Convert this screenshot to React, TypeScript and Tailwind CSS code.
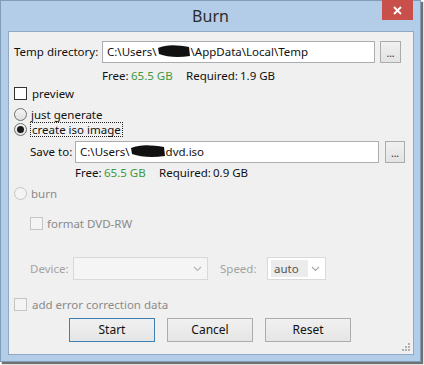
import React from 'react';

const font = { fontFamily: '"Noto Sans", "Open Sans", sans-serif' };

function Blob({ w }: { w: number }) {
  return (
    <svg width={w} height="14" viewBox={`0 0 ${w} 14`} className="inline-block align-middle -mt-[2px]">
      <path
        d={`M1 4 C ${w * 0.3} 0, ${w * 0.6} 1, ${w - 2} 3 L ${w - 1} 12 C ${w * 0.6} 14, ${w * 0.3} 13, 2 10 Z`}
        fill="#111"
      />
    </svg>
  );
}

function Checkbox({ disabled }: { disabled?: boolean }) {
  return (
    <span
      className={
        'inline-block w-[13px] h-[13px] border shrink-0 ' +
        (disabled ? 'border-[#c4c4c4] bg-[#f4f4f4]' : 'border-[#333333] bg-white')
      }
    />
  );
}

function Radio({ checked, disabled }: { checked?: boolean; disabled?: boolean }) {
  return (
    <span
      className={
        'flex items-center justify-center w-[13px] h-[13px] rounded-full border shrink-0 ' +
        (disabled
          ? 'border-[#c4c4c4] bg-[#f4f4f4]'
          : 'border-[#707070] bg-gradient-to-b from-[#f4f4f4] to-[#e0e0e0]')
      }
    >
      {checked && <span className="w-[7px] h-[7px] rounded-full bg-[#1a1a1a]" />}
    </span>
  );
}

function Browse({ w }: { w: string }) {
  return (
    <div
      className={
        w +
        ' h-full border border-[#acacac] bg-gradient-to-b from-[#f0f0f0] to-[#e3e3e3] flex items-end justify-center pb-[4px] text-[10px] leading-none text-[#222]'
      }
    >
      ...
    </div>
  );
}

function Chevron({ color }: { color: string }) {
  return (
    <svg width="9" height="6" viewBox="0 0 9 6">
      <path d="M1 1 L4.5 4.5 L8 1" stroke={color} strokeWidth="1.2" fill="none" />
    </svg>
  );
}

function Btn({ label, def }: { label: string; def?: boolean }) {
  return (
    <div
      className={
        'w-[86px] h-[24px] border flex items-center justify-center text-[12px] text-[#111] bg-gradient-to-b from-[#f0f0f0] to-[#e5e5e5] ' +
        (def ? 'border-[#3c7fb1]' : 'border-[#acacac]')
      }
    >
      {label}
    </div>
  );
}

function SpaceRow({ req, pad }: { req: string; pad: string }) {
  return (
    <div className={'h-[14px] flex items-center leading-none whitespace-nowrap ' + pad}>
      <span className="w-[29px]">Free:</span>
      <span className="w-[55px] text-[#3e9a3e]">65.5 GB</span>
      <span className="w-[54px]">Required:</span>
      <span>{req}</span>
    </div>
  );
}

export default function App() {
  return (
    <div className="w-[424px] h-[365px] bg-[#fafafa] overflow-hidden" style={font}>
      <div className="relative w-[421px] h-[362px] bg-[#b3cde8] border border-[#7f9db9] shadow-[2px_2px_1px_rgba(0,0,0,0.55)] pl-[7px] pt-[30px]">
        <div className="absolute left-0 right-0 top-0 h-[30px] flex items-center justify-center text-[16px] text-[#2b2b2b]">
          Burn
        </div>
        <div className="absolute top-[-1px] right-[7px] w-[31px] h-[20px] bg-[#c9504a] flex items-center justify-center">
          <svg width="9" height="9" viewBox="0 0 9 9">
            <path d="M1 1 L8 8 M8 1 L1 8" stroke="#fff" strokeWidth="1.8" />
          </svg>
        </div>

        <div className="w-[406px] h-[324px] bg-[#f0f0f0] border border-[#8fa9c4] flex flex-col text-[11.5px] text-[#111] relative">
          <div className="mt-[9px] h-[22px] flex items-center pl-[5px]">
            <span className="w-[88px] whitespace-nowrap">Temp directory:</span>
            <div className="w-[273px] h-full bg-white border border-[#abadb3] flex items-center pl-[4px] whitespace-nowrap">
              C:\Users\<Blob w={34} />\AppData\Local\Temp
            </div>
            <div className="ml-[5px] h-full">
              <Browse w="w-[21px]" />
            </div>
          </div>

          <div className="mt-[6px]">
            <SpaceRow req="1.9 GB" pad="pl-[93px]" />
          </div>

          <div className="mt-[4px] h-[13px] flex items-center pl-[5px] gap-[5px]">
            <Checkbox />
            <span>preview</span>
          </div>

          <div className="mt-[8px] h-[13px] flex items-center pl-[5px] gap-[4px]">
            <Radio />
            <span>just generate</span>
          </div>
          <div className="mt-[2px] h-[13px] flex items-center pl-[5px] gap-[3px]">
            <Radio checked />
            <span className="border border-dotted border-[#222] px-[1px] leading-[13px]">create iso image</span>
          </div>

          <div className="mt-[5px] h-[22px] flex items-center pl-[21px]">
            <span className="w-[45px]">Save to:</span>
            <div className="w-[304px] h-full bg-white border border-[#abadb3] flex items-center pl-[4px] whitespace-nowrap">
              C:\Users\<Blob w={36} />dvd.iso
            </div>
            <div className="ml-[6px] h-full">
              <Browse w="w-[20px]" />
            </div>
          </div>

          <div className="mt-[3px]">
            <SpaceRow req="0.9 GB" pad="pl-[66px]" />
          </div>

          <div className="mt-[7px] h-[13px] flex items-center pl-[5px] gap-[4px] text-[#8a8a8a]">
            <Radio disabled />
            <span>burn</span>
          </div>

          <div className="mt-[17px] h-[13px] flex items-center pl-[21px] gap-[4px] text-[#8a8a8a]">
            <Checkbox disabled />
            <span>format DVD-RW</span>
          </div>

          <div className="mt-[27px] h-[23px] flex items-center pl-[21px] text-[#a3a3a3]">
            <span className="w-[43px]">Device:</span>
            <div className="w-[135px] h-full border border-[#d9d9d9] bg-[#f5f5f5] flex items-center justify-end pr-[5px]">
              <Chevron color="#b5b5b5" />
            </div>
            <span className="ml-[12px] w-[47px]">Speed:</span>
            <div className="w-[59px] h-full border border-[#d9d9d9] bg-white flex items-center pl-[3px] pr-[5px]">
              <span className="bg-[#ececec] text-[#555] w-[37px] h-[17px] pl-[3px] flex items-center">auto</span>
              <span className="ml-auto">
                <Chevron color="#a8a8a8" />
              </span>
            </div>
          </div>

          <div className="mt-[18px] h-[13px] flex items-center pl-[5px] gap-[5px] text-[#8a8a8a]">
            <Checkbox disabled />
            <span>add error correction data</span>
          </div>

          <div className="mt-[7px] flex pl-[60px] gap-[12px]">
            <Btn label="Start" def />
            <Btn label="Cancel" />
            <Btn label="Reset" />
          </div>

          <svg className="absolute right-[2px] bottom-[2px]" width="10" height="10" viewBox="0 0 10 10">
            <g fill="#b0b0b0">
              <rect x="7" y="1" width="2" height="2" />
              <rect x="4" y="4" width="2" height="2" />
              <rect x="7" y="4" width="2" height="2" />
              <rect x="1" y="7" width="2" height="2" />
              <rect x="4" y="7" width="2" height="2" />
              <rect x="7" y="7" width="2" height="2" />
            </g>
          </svg>
        </div>
      </div>
    </div>
  );
}
